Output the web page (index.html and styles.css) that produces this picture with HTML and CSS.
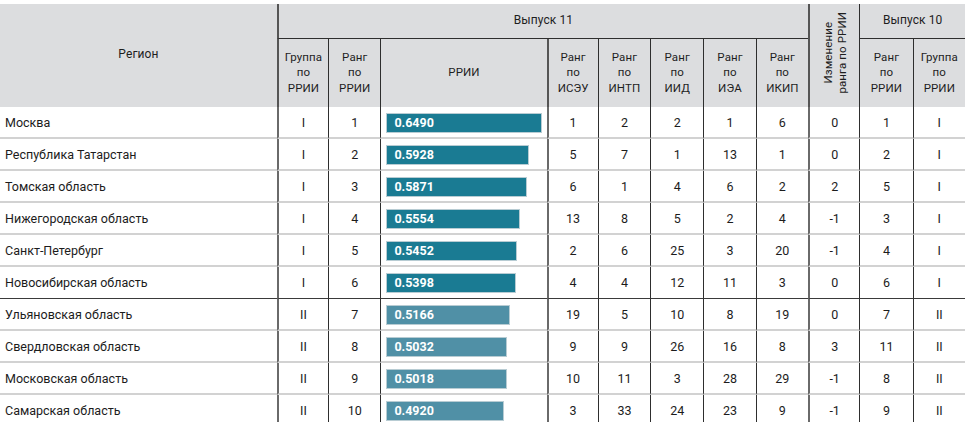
FILE: index.html
```html
<!DOCTYPE html>
<html lang="ru">
<head>
<meta charset="utf-8">
<link rel="stylesheet" href="styles.css">
</head>
<body>
<table class="rating">
  <colgroup>
    <col class="c-region">
    <col class="c-grp"><col class="c-rank">
    <col class="c-bar">
    <col class="c-isu"><col class="c-intp"><col class="c-iid"><col class="c-iea"><col class="c-ikip">
    <col class="c-chg"><col class="c-r10"><col class="c-g10">
  </colgroup>
  <thead>
    <tr class="h1">
      <th rowspan="2" class="region-h">Регион</th>
      <th colspan="8" class="span-h thick-l">Выпуск 11</th>
      <th rowspan="2" class="rot-h thick-l"><span class="rot">Изменение<br>ранга по РРИИ</span></th>
      <th colspan="2" class="span-h">Выпуск 10</th>
    </tr>
    <tr class="h2">
      <th class="thick-l">Группа<br>по<br>РРИИ</th>
      <th>Ранг<br>по<br>РРИИ</th>
      <th>РРИИ</th>
      <th class="thick-l">Ранг<br>по<br>ИСЭУ</th>
      <th>Ранг<br>по<br>ИНТП</th>
      <th>Ранг<br>по<br>ИИД</th>
      <th>Ранг<br>по<br>ИЭА</th>
      <th>Ранг<br>по<br>ИКИП</th>
      <th>Ранг<br>по<br>РРИИ</th>
      <th>Группа<br>по<br>РРИИ</th>
    </tr>
  </thead>
  <tbody>
    <tr><td class="region">Москва</td><td class="thick-l">I</td><td>1</td><td class="barcell"><div class="bar g1" style="width:156px">0.6490</div></td><td class="thick-l">1</td><td>2</td><td>2</td><td>1</td><td>6</td><td class="thick-l">0</td><td>1</td><td>I</td></tr>
    <tr><td class="region">Республика Татарстан</td><td class="thick-l">I</td><td>2</td><td class="barcell"><div class="bar g1" style="width:143px">0.5928</div></td><td class="thick-l">5</td><td>7</td><td>1</td><td>13</td><td>1</td><td class="thick-l">0</td><td>2</td><td>I</td></tr>
    <tr><td class="region">Томская область</td><td class="thick-l">I</td><td>3</td><td class="barcell"><div class="bar g1" style="width:141px">0.5871</div></td><td class="thick-l">6</td><td>1</td><td>4</td><td>6</td><td>2</td><td class="thick-l">2</td><td>5</td><td>I</td></tr>
    <tr><td class="region">Нижегородская область</td><td class="thick-l">I</td><td>4</td><td class="barcell"><div class="bar g1" style="width:134px">0.5554</div></td><td class="thick-l">13</td><td>8</td><td>5</td><td>2</td><td>4</td><td class="thick-l">-1</td><td>3</td><td>I</td></tr>
    <tr><td class="region">Санкт-Петербург</td><td class="thick-l">I</td><td>5</td><td class="barcell"><div class="bar g1" style="width:131px">0.5452</div></td><td class="thick-l">2</td><td>6</td><td>25</td><td>3</td><td>20</td><td class="thick-l">-1</td><td>4</td><td>I</td></tr>
    <tr class="last-g"><td class="region">Новосибирская область</td><td class="thick-l">I</td><td>6</td><td class="barcell"><div class="bar g1" style="width:130px">0.5398</div></td><td class="thick-l">4</td><td>4</td><td>12</td><td>11</td><td>3</td><td class="thick-l">0</td><td>6</td><td>I</td></tr>
    <tr><td class="region">Ульяновская область</td><td class="thick-l">II</td><td>7</td><td class="barcell"><div class="bar g2" style="width:124px">0.5166</div></td><td class="thick-l">19</td><td>5</td><td>10</td><td>8</td><td>19</td><td class="thick-l">0</td><td>7</td><td>II</td></tr>
    <tr><td class="region">Свердловская область</td><td class="thick-l">II</td><td>8</td><td class="barcell"><div class="bar g2" style="width:121px">0.5032</div></td><td class="thick-l">9</td><td>9</td><td>26</td><td>16</td><td>8</td><td class="thick-l">3</td><td>11</td><td>II</td></tr>
    <tr><td class="region">Московская область</td><td class="thick-l">II</td><td>9</td><td class="barcell"><div class="bar g2" style="width:121px">0.5018</div></td><td class="thick-l">10</td><td>11</td><td>3</td><td>28</td><td>29</td><td class="thick-l">-1</td><td>8</td><td>II</td></tr>
    <tr><td class="region">Самарская область</td><td class="thick-l">II</td><td>10</td><td class="barcell"><div class="bar g2" style="width:118px">0.4920</div></td><td class="thick-l">3</td><td>33</td><td>24</td><td>23</td><td>9</td><td class="thick-l">-1</td><td>9</td><td>II</td></tr>
  </tbody>
</table>
</body>
</html>
```
FILE: styles.css
```css
html, body {
  margin: 0;
  padding: 0;
  background: #fff;
}
body {
  padding-top: 4px;
  font-family: Roboto, "Noto Sans", "Liberation Sans", sans-serif;
  color: #1c1c1c;
}
.rating {
  border-collapse: separate;
  border-spacing: 0;
  table-layout: fixed;
  width: 965px;
  font-size: 12px;
}
.c-region { width: 270px; }
.c-grp { width: 50px; }
.c-rank { width: 51px; }
.c-bar { width: 162px; }
.c-isu { width: 50px; }
.c-intp { width: 51px; }
.c-iid { width: 52px; }
.c-iea { width: 51px; }
.c-ikip { width: 51px; }
.c-chg { width: 50px; }
.c-r10 { width: 52px; }
.c-g10 { width: 51px; }

.rating th {
  background: #dcdddf;
  font-weight: 400;
  font-size: 11.5px;
  line-height: 15.5px;
  color: #1e1e1e;
  text-align: center;
  vertical-align: middle;
  padding: 0;
  border-left: 1px solid #2e2e2e;
  letter-spacing: 0.1px;
}
.rating th.region-h {
  border-left: none;
  font-size: 12px;
  padding-bottom: 2px;
}
.h1 th { height: 34px; }
.h2 th { height: 68px; }
.rating th.span-h {
  border-bottom: 1px solid #2e2e2e;
  font-size: 12px;
}
.rating .thick-l {
  border-left: 2px solid #6a6a6a;
}
.rating th.thick-l {
  border-left: 2px solid #555;
}
.rot-h { padding: 0; }
.rot {
  display: inline-block;
  writing-mode: vertical-rl;
  transform: rotate(180deg);
  line-height: 14px;
  font-size: 11.5px;
  text-align: center;
}

.rating td {
  height: 30px;
  padding: 0;
  text-align: center;
  vertical-align: middle;
  font-size: 12.5px;
  border-left: 1px solid #2e2e2e;
  border-bottom: 2px solid #d2d2d2;
}
.rating td.region {
  text-align: left;
  border-left: none;
  padding-left: 5px;
}
.rating tr.last-g td {
  border-bottom: 1px solid #3a3a3a;
  height: 31px;
}
.rating td.barcell {
  text-align: left;
  padding-left: 5px;
}
.bar {
  box-sizing: border-box;
  height: 20px;
  line-height: 18px;
  color: #fff;
  font-weight: 700;
  font-size: 12.5px;
  padding-left: 7px;
  border: 1px solid #b8ccd3;
  margin-top: 1px;
}
.bar.g1 { background: #1a7b93; }
.bar.g2 { background: #5090a6; }
```
